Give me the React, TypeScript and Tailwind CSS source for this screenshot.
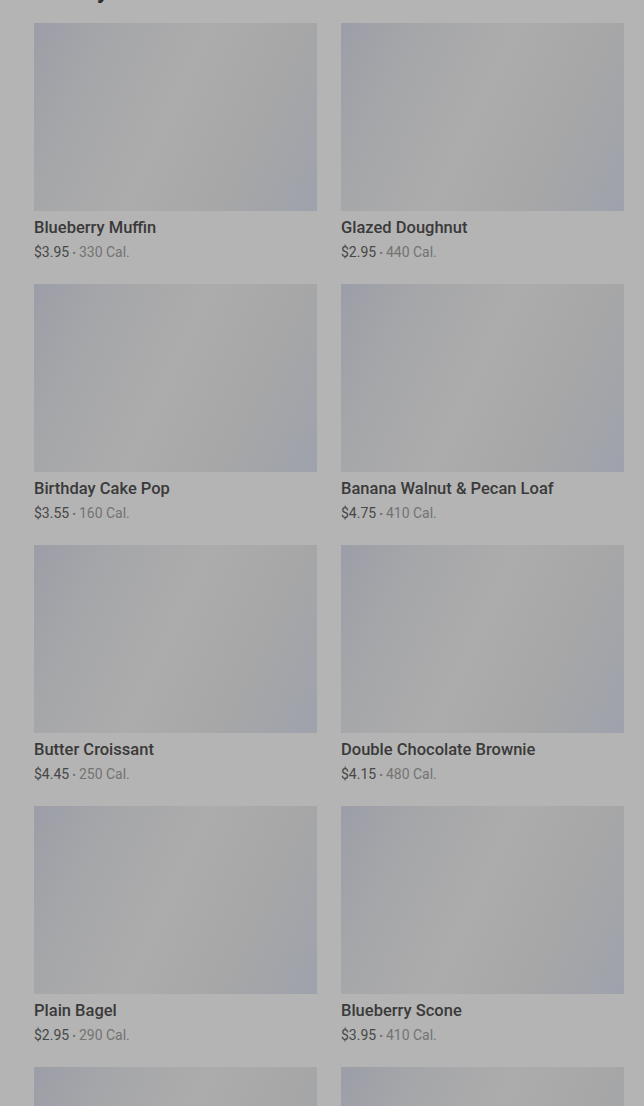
import React from "react";

const items = [
  { name: "Blueberry Muffin", price: "$3.95", cal: "330 Cal." },
  { name: "Glazed Doughnut", price: "$2.95", cal: "440 Cal." },
  { name: "Birthday Cake Pop", price: "$3.55", cal: "160 Cal." },
  { name: "Banana Walnut & Pecan Loaf", price: "$4.75", cal: "410 Cal." },
  { name: "Butter Croissant", price: "$4.45", cal: "250 Cal." },
  { name: "Double Chocolate Brownie", price: "$4.15", cal: "480 Cal." },
  { name: "Plain Bagel", price: "$2.95", cal: "290 Cal." },
  { name: "Blueberry Scone", price: "$3.95", cal: "410 Cal." },
  { name: "Cheese Danish", price: "$3.75", cal: "290 Cal." },
  { name: "Chocolate Croissant", price: "$4.25", cal: "300 Cal." },
];

export default function App() {
  return (
    <div
      className="h-[1106px] overflow-hidden bg-[#b4b4b4] pl-[34px] pr-[20px]"
      style={{ fontFamily: "Roboto, 'Liberation Sans', sans-serif" }}
    >
      <h2 className="-mt-[26px] text-[24px] leading-[32px] font-bold text-[#2e2e2e]">Bakery</h2>
      <div className="mt-[17px] grid grid-cols-2 gap-x-[24px] gap-y-[20px]">
        {items.map((it) => (
          <div key={it.name} className="flex flex-col">
            <div className="h-[188px] w-full bg-[linear-gradient(115deg,#9c9ea8_0%,#a5a6a9_20%,#acacac_48%,#a7a7a7_72%,#9ea2ac_100%)]" />
            <div className="mt-[7px] text-[16.5px] leading-[20px] font-medium text-[#3a3a3a]">{it.name}</div>
            <div className="mt-[4px] text-[14px] leading-[20px] text-[#737373]">
              <span className="text-[#474747]">{it.price}</span>
              <span className="mx-[3px] text-[11px]">•</span>
              <span>{it.cal}</span>
            </div>
          </div>
        ))}
      </div>
    </div>
  );
}
